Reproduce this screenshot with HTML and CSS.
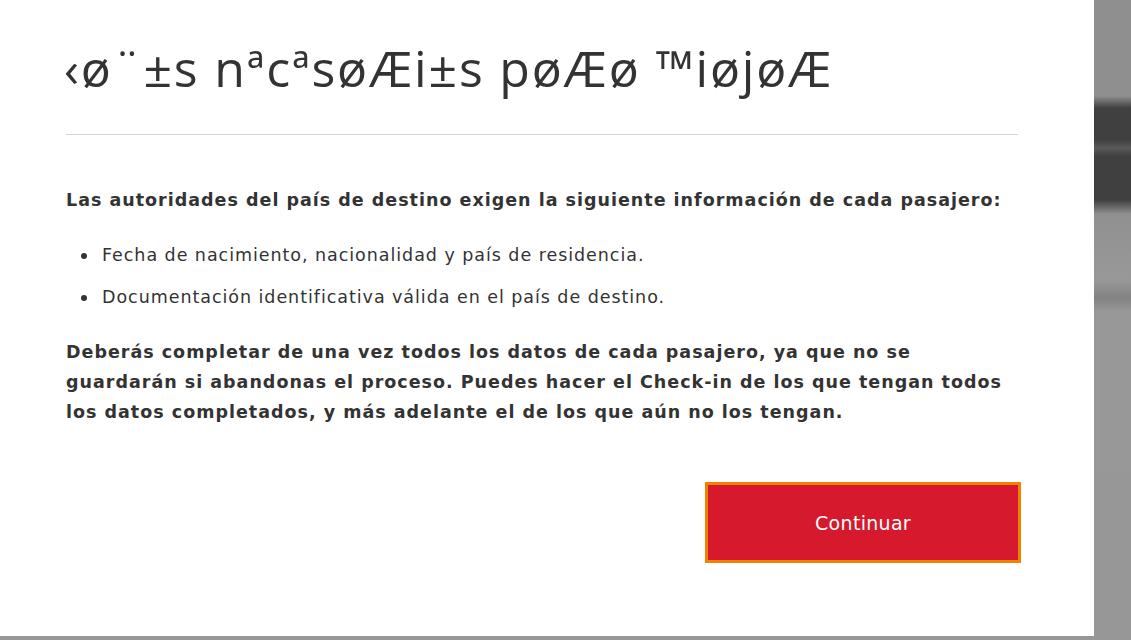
FILE: index.html
```html
<!DOCTYPE html>
<html lang="es">
<head>
<meta charset="utf-8">
<link rel="stylesheet" href="styles.css">
</head>
<body>
<div class="page">
  <div class="modal">
    <h1 class="title">‹ø¨±s nªcªsøÆi±s pøÆø ™iøjøÆ</h1>
    <hr class="divider">
    <p class="lead">Las autoridades del país de destino exigen la siguiente información de cada pasajero:</p>
    <ul class="list">
      <li>Fecha de nacimiento, nacionalidad y país de residencia.</li>
      <li>Documentación identificativa válida en el país de destino.</li>
    </ul>
    <p class="note">Deberás completar de una vez todos los datos de cada pasajero, ya que no se guardarán si abandonas el proceso. Puedes hacer el Check-in de los que tengan todos los datos completados, y más adelante el de los que aún no los tengan.</p>
    <div class="actions">
      <button class="btn">Continuar</button>
    </div>
  </div>
  <div class="backdrop"></div>
</div>
</body>
</html>
```
FILE: styles.css
```css
html, body {
  margin: 0;
  padding: 0;
  height: 100%;
  overflow: hidden;
}
body {
  background: #979797;
}
.page {
  display: flex;
  width: 1131px;
  height: 640px;
}
.modal {
  width: 1094px;
  height: 636px;
  background: #fff;
  box-sizing: border-box;
  padding: 30px 76px 0 66px;
  color: #333;
  font-family: "DejaVu Sans", Verdana, sans-serif;
}
.backdrop {
  flex: 1;
  height: 640px;
  background: linear-gradient(to bottom,
    #8f8f8f 0, #8f8f8f 96px, #404040 108px, #404040 140px, #5a5a5a 148px, #404040 156px, #404040 200px, #909090 214px, #989898 280px, #838383 298px, #989898 312px, #979797 640px);
}
.title {
  margin: 0 0 0 -2px;
  font-family: "Open Sans", sans-serif;
  font-weight: 400;
  font-size: 50px;
  line-height: 76px;
  color: #333;
  letter-spacing: 1.8px;
}
.divider {
  margin: 28px 0 0 0;
  border: 0;
  border-top: 1px solid #d6d6d6;
  height: 0;
}
.lead {
  margin: 52px 0 0 0;
  font-weight: 700;
  font-size: 17.5px;
  line-height: 26px;
  letter-spacing: 1px;
}
.list {
  margin: 29px 0 0 0;
  padding-left: 36px;
  list-style: none;
  font-size: 17.5px;
  line-height: 26px;
  letter-spacing: 0.95px;
}
.list li {
  position: relative;
  margin-bottom: 16px;
}
.list li::before {
  content: "";
  position: absolute;
  left: -21px;
  top: 11px;
  width: 6px;
  height: 6px;
  border-radius: 50%;
  background: #333;
}
.note {
  margin: 27px 0 0 0;
  font-weight: 700;
  font-size: 17.5px;
  line-height: 30px;
  letter-spacing: 1px;
}
.actions {
  display: flex;
  justify-content: flex-end;
  margin-top: 55px;
  margin-right: -3px;
}
.btn {
  width: 316px;
  height: 81px;
  background: #d6192d;
  border: 3px solid #ef8300;
  color: #fff;
  font-family: "DejaVu Sans", Verdana, sans-serif;
  font-size: 19px;
  letter-spacing: 0.3px;
  padding: 0;
}
```
